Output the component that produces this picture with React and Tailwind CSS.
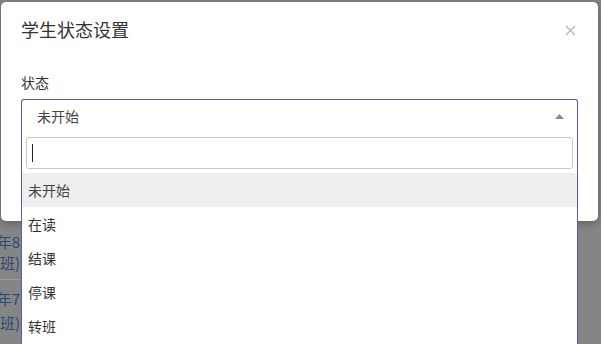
import React from "react";

const font = { fontFamily: '"Noto Sans CJK SC", "Noto Sans", sans-serif' };

export default function App() {
  const options = ["未开始", "在读", "结课", "停课", "转班"];
  return (
    <div
      className="relative w-[601px] h-[344px] overflow-hidden bg-[#858585]"
      style={font}
    >
      {/* page behind the overlay */}
      <div className="flex flex-col pt-[231px] w-[20px]">
        <div className="flex flex-col border-b border-[#9a9a9a] pb-[6px]">
          <div className="flex justify-end overflow-hidden whitespace-nowrap text-[15px] leading-[21px] text-[#2a4a74]">
            2023年8
          </div>
          <div className="flex justify-end overflow-hidden whitespace-nowrap text-[15px] leading-[21px] text-[#2a4a74]">
            (一班)
          </div>
        </div>
        <div className="flex flex-col pt-[8px]">
          <div className="flex justify-end overflow-hidden whitespace-nowrap text-[15px] leading-[21px] text-[#2a4a74]">
            2023年7
          </div>
          <div className="flex justify-end overflow-hidden whitespace-nowrap text-[15px] leading-[21px] text-[#2a4a74] mt-[3px]">
            (一班)
          </div>
        </div>
      </div>

      {/* modal */}
      <div className="absolute left-[1px] top-[2px] w-[597px] h-[219px] bg-white rounded-[5px] shadow-[0_2px_8px_rgba(0,0,0,0.3)]">
        <div className="flex items-center justify-between pl-[20px] pr-[22px] pt-[15px] pb-[14px]">
          <div className="text-[18px] leading-[25px] text-[#333]">学生状态设置</div>
          <svg width="11" height="11" viewBox="0 0 11 11" className="mt-[2px]">
            <path d="M1 1L10 10M10 1L1 10" stroke="#b5b5b5" strokeWidth="1.3" />
          </svg>
        </div>
        <div className="flex flex-col px-[20px] pt-[17px]">
          <div className="text-[14px] leading-[18px] text-[#333]">状态</div>
          <div className="relative mt-[8px]">
            <div className="flex items-center justify-between h-[36px] border border-[#545ca3] border-b-0 rounded-t-[3px] pl-[15px] pr-[13px] pb-[3px]">
              <span className="text-[14px] text-[#444]">未开始</span>
              <svg width="9" height="5" viewBox="0 0 9 5">
                <path d="M0 5L4.5 0L9 5Z" fill="#8a8a8a" />
              </svg>
            </div>
            {/* dropdown */}
            <div className="absolute left-0 right-0 top-[36px] bg-white border-x border-[#545ca3] flex flex-col z-10">
              <div className="px-[4px] pt-[2px] pb-[4px]">
                <div className="flex items-center h-[32px] border border-[#c8c8c8] rounded-[3px] pl-[5px]">
                  <div className="w-px h-[18px] bg-[#222]"></div>
                </div>
              </div>
              {options.map((o, i) => (
                <div
                  key={o}
                  className={
                    "flex items-center h-[34px] pl-[6px] text-[14px] text-[#333] " +
                    (i === 0 ? "bg-[#eeeeee] text-[#444]" : "")
                  }
                >
                  {o}
                </div>
              ))}
              <div className="h-[20px]"></div>
            </div>
          </div>
        </div>
      </div>
    </div>
  );
}
